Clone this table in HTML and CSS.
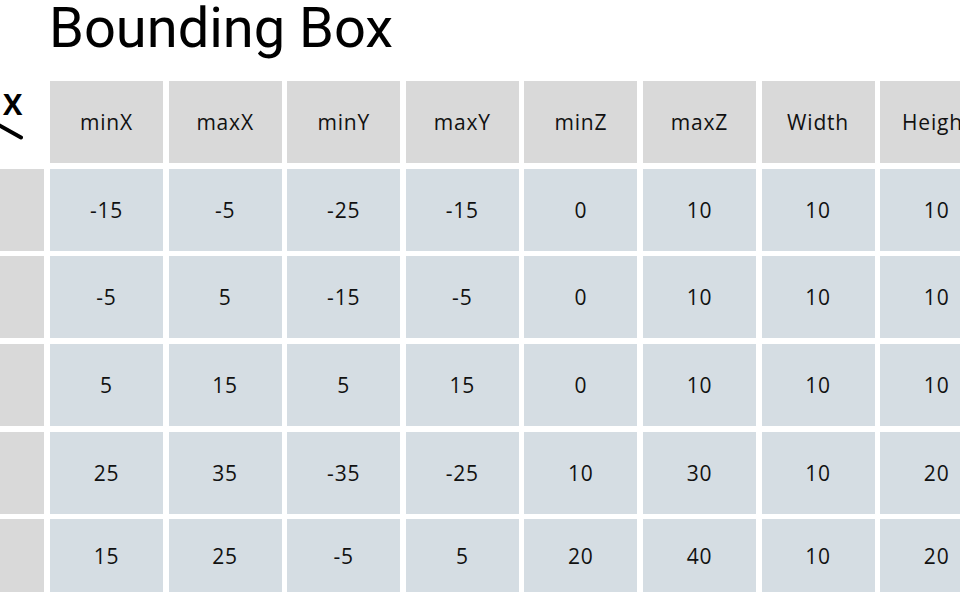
FILE: index.html
```html
<!DOCTYPE html>
<html lang="en">
<head>
<meta charset="utf-8">
<title>Bounding Box</title>
<link rel="stylesheet" href="styles.css">
</head>
<body>
<div class="page">
  <h1 class="title">Bounding Box</h1>
  <div class="grid">
    <div class="corner">
      <span class="corner-x">X</span>
      <svg class="corner-line" width="26" height="18" viewBox="0 0 26 18"><line x1="0" y1="2" x2="24" y2="15.5" stroke="#000" stroke-width="4" stroke-linecap="round"/></svg>
    </div>
    <div class="cell head">minX</div>
    <div class="cell head">maxX</div>
    <div class="cell head">minY</div>
    <div class="cell head">maxY</div>
    <div class="cell head">minZ</div>
    <div class="cell head">maxZ</div>
    <div class="cell head">Width</div>
    <div class="cell head">Height</div>
    <div class="cell head">Depth</div>

    <div class="cell rowhead"></div>
    <div class="cell">-15</div><div class="cell">-5</div><div class="cell">-25</div><div class="cell">-15</div><div class="cell">0</div><div class="cell">10</div><div class="cell">10</div><div class="cell">10</div><div class="cell">10</div>

    <div class="cell rowhead"></div>
    <div class="cell">-5</div><div class="cell">5</div><div class="cell">-15</div><div class="cell">-5</div><div class="cell">0</div><div class="cell">10</div><div class="cell">10</div><div class="cell">10</div><div class="cell">10</div>

    <div class="cell rowhead"></div>
    <div class="cell">5</div><div class="cell">15</div><div class="cell">5</div><div class="cell">15</div><div class="cell">0</div><div class="cell">10</div><div class="cell">10</div><div class="cell">10</div><div class="cell">10</div>

    <div class="cell rowhead"></div>
    <div class="cell">25</div><div class="cell">35</div><div class="cell">-35</div><div class="cell">-25</div><div class="cell">10</div><div class="cell">30</div><div class="cell">10</div><div class="cell">20</div><div class="cell">20</div>

    <div class="cell rowhead"></div>
    <div class="cell">15</div><div class="cell">25</div><div class="cell">-5</div><div class="cell">5</div><div class="cell">20</div><div class="cell">40</div><div class="cell">10</div><div class="cell">20</div><div class="cell">20</div>
  </div>
</div>
</body>
</html>
```

FILE: styles.css
```css
html, body {
  margin: 0;
  padding: 0;
  background: #ffffff;
  overflow: hidden;
  width: 960px;
  height: 600px;
}

.page {
  width: 960px;
  height: 600px;
  overflow: hidden;
}

.title {
  margin: 0 0 0 49px;
  font-family: Roboto, "Liberation Sans", sans-serif;
  font-weight: 400;
  font-size: 56px;
  line-height: 56px;
  color: #000;
  white-space: nowrap;
}

.grid {
  display: grid;
  grid-template-columns: repeat(10, 113px);
  grid-template-rows: 82px 82px 82px 82px 82px 73px;
  gap: 5.65px 5.6px;
  margin: 25px 0 0 -68.6px;
  width: max-content;
  font-family: "Open Sans", "Noto Sans", sans-serif;
  font-size: 21px;
  font-weight: 500;
  letter-spacing: 0.8px;
  color: #111;
}

.cell {
  display: flex;
  align-items: center;
  justify-content: center;
  background: #d5dde3;
  white-space: nowrap;
}

.cell.head,
.cell.rowhead {
  background: #d9d9d9;
}

.corner {
  display: flex;
  flex-direction: column;
  align-items: flex-end;
  padding: 10px 22px 0 0;
}

.corner-x {
  font-family: "Open Sans", sans-serif;
  font-weight: 700;
  font-size: 29px;
  line-height: 26px;
  letter-spacing: 0;
  color: #000;
}

.corner-line {
  display: block;
  margin-top: 5px;
  margin-right: -1px;
}
```
